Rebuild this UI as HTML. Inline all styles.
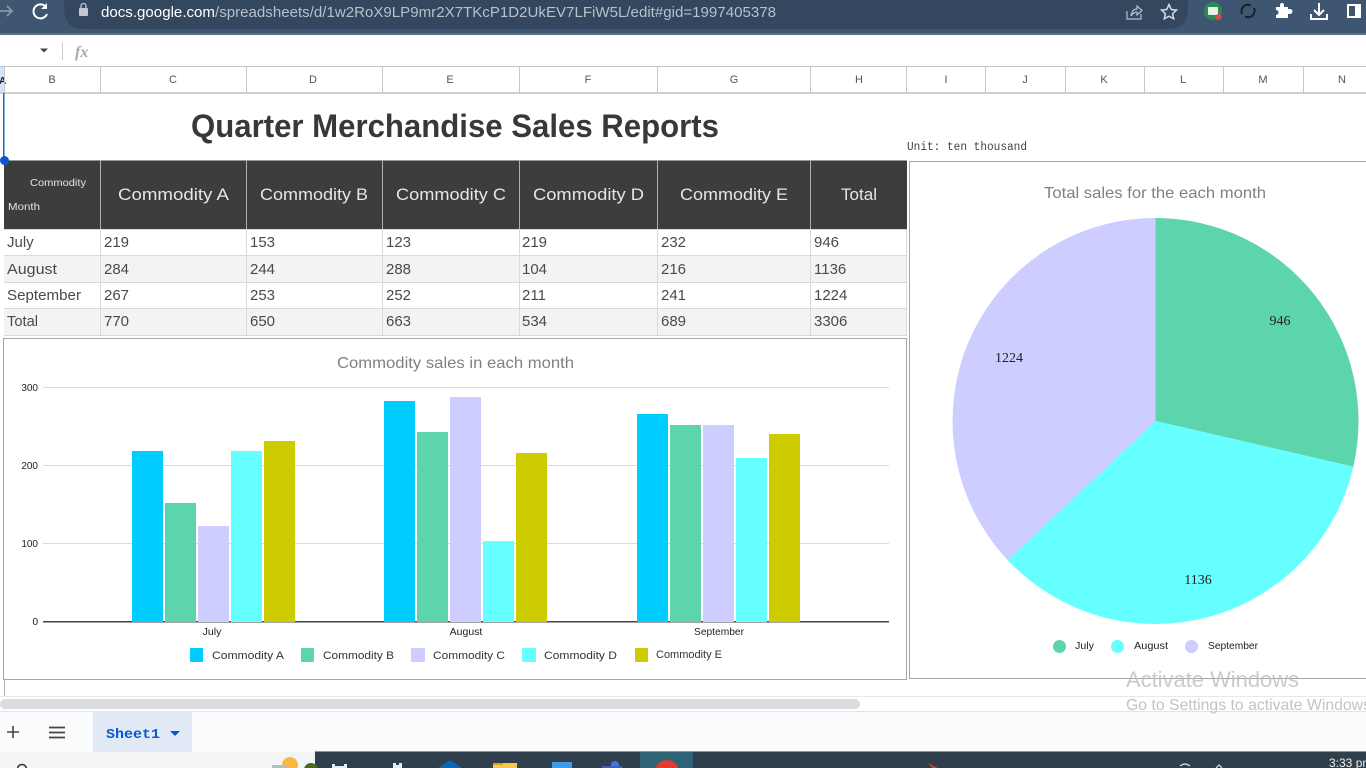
<!DOCTYPE html>
<html><head><meta charset="utf-8"><style>
html,body{margin:0;padding:0;background:#fff;width:1366px;height:768px;overflow:hidden}
svg{display:block}
svg{font-family:"Liberation Sans",sans-serif}
.m{font-family:"Liberation Mono",monospace}
.s{font-family:"Liberation Serif",serif}
</style></head><body>
<svg width="1366" height="768" viewBox="0 0 1366 768" xmlns="http://www.w3.org/2000/svg">
<!-- browser bar -->
<rect x="0" y="0" width="1366" height="34" fill="#3f5673"/>
<rect x="0" y="33" width="1366" height="2" fill="#5d6f85"/>
<path d="M64 0H1188V8Q1188 29 1168 29H84Q64 29 64 8Z" fill="#33475f"/>
<path d="M0 11H11M7 6L12 11L7 16" stroke="#8c98a8" stroke-width="1.8" fill="none"/>
<path d="M46 7A7 7 0 1 0 47 14" stroke="#fff" stroke-width="2" fill="none"/><path d="M47 3V9H41Z" fill="#fff"/>
<rect x="79" y="8" width="9" height="8" rx="1" fill="#c3c9d2"/><path d="M81 8V6A2.5 2.5 0 0 1 86 6V8" stroke="#c3c9d2" fill="none" stroke-width="1.3"/>
<text x="101" y="17" font-size="14.5" fill="#fff" textLength="114" lengthAdjust="spacingAndGlyphs">docs.google.com</text>
<text x="215" y="17" font-size="14.5" fill="#b7c0cc" textLength="561" lengthAdjust="spacingAndGlyphs">/spreadsheets/d/1w2RoX9LP9mr2X7TKcP1D2UkEV7LFiW5L/edit#gid=1997405378</text>
<path d="M1127 11V19H1141V14M1131 16Q1132 9 1137 9V6L1142 10.5L1137 15V12Q1134 12 1131 16Z" stroke="#b7c0cc" stroke-width="1.2" fill="none"/>
<path d="M1169 4.500L1171.300 9.500L1176.500 10.100L1172.600 13.700L1173.700 18.800L1169 16.200L1164.300 18.800L1165.400 13.700L1161.500 10.100L1166.700 9.500Z" stroke="#d5dae0" stroke-width="1.5" fill="none"/>
<circle cx="1213" cy="11" r="9" fill="#2f8a54"/><rect x="1208" y="7" width="10" height="8" rx="1" fill="#e8efe9"/><circle cx="1218.500" cy="17" r="3" fill="#e04a42"/>
<path d="M1242 14A6.500 6.500 0 0 1 1251 5.500M1254 8A6.500 6.500 0 0 1 1245 16.500" stroke="#1a1f24" stroke-width="2" fill="none"/>
<path d="M1276 7H1280V5A2 2 0 0 1 1284 5V7H1288V9H1290A2 2 0 0 1 1290 14H1288V18H1276V15A2 2 0 0 0 1276 10Z" fill="#fff"/>
<path d="M1319 3V14M1314 10L1319 15L1324 10M1311 14V19H1327V14" stroke="#fff" stroke-width="2" fill="none"/>
<rect x="1347" y="4" width="14" height="14" fill="#fff"/><rect x="1349" y="6" width="6" height="10" fill="#3f5673"/>
<!-- formula bar -->
<path d="M40 48.500H48L44 52.500Z" fill="#444"/>
<rect x="62" y="42" width="1" height="18" fill="#ccc"/>
<text x="75" y="57" font-size="16" class="s" font-style="italic" font-weight="bold" fill="#a8a8a8">fx</text>
<!-- column headers -->
<rect x="0" y="66" width="1366" height="1" fill="#c4c4c4"/>
<rect x="0" y="92" width="1366" height="2" fill="#cfcfcf"/>
<rect x="0" y="67" width="4" height="25" fill="#d3e3fd"/>
<text x="-1" y="84" font-size="10" font-weight="bold" fill="#222">A</text>
<g fill="#c8c8c8">
<rect x="4" y="67" width="1" height="26"/><rect x="100" y="67" width="1" height="26"/><rect x="246" y="67" width="1" height="26"/><rect x="382" y="67" width="1" height="26"/><rect x="519" y="67" width="1" height="26"/><rect x="657" y="67" width="1" height="26"/><rect x="810" y="67" width="1" height="26"/><rect x="906" y="67" width="1" height="26"/><rect x="985" y="67" width="1" height="26"/><rect x="1065" y="67" width="1" height="26"/><rect x="1144" y="67" width="1" height="26"/><rect x="1223" y="67" width="1" height="26"/><rect x="1303" y="67" width="1" height="26"/>
</g>
<g font-size="11" fill="#555" text-anchor="middle">
<text x="52" y="83">B</text><text x="173" y="83">C</text><text x="313" y="83">D</text><text x="450" y="83">E</text><text x="588" y="83">F</text><text x="734" y="83">G</text><text x="859" y="83">H</text><text x="946" y="83">I</text><text x="1025" y="83">J</text><text x="1104" y="83">K</text><text x="1183" y="83">L</text><text x="1263" y="83">M</text><text x="1342" y="83">N</text>
</g>
<!-- title -->
<text x="191" y="137" font-size="32" font-weight="bold" fill="#383838" textLength="528" lengthAdjust="spacingAndGlyphs">Quarter Merchandise Sales Reports</text>
<text x="907" y="150" class="m" font-size="11.500" fill="#444" textLength="120" lengthAdjust="spacingAndGlyphs">Unit: ten thousand</text>
<!-- table -->
<rect x="4" y="160" width="903" height="69" fill="#3d3d3d"/>
<rect x="4" y="160" width="903" height="1" fill="#999"/>
<rect x="4" y="255" width="903" height="27" fill="#f3f3f3"/>
<rect x="4" y="308" width="903" height="27" fill="#f3f3f3"/>
<g fill="#d9d9d9">
<rect x="4" y="229" width="903" height="1"/><rect x="4" y="255" width="903" height="1"/><rect x="4" y="282" width="903" height="1"/><rect x="4" y="308" width="903" height="1"/><rect x="4" y="335" width="903" height="1"/>
<rect x="100" y="229" width="1" height="107"/><rect x="246" y="229" width="1" height="107"/><rect x="382" y="229" width="1" height="107"/><rect x="519" y="229" width="1" height="107"/><rect x="657" y="229" width="1" height="107"/><rect x="810" y="229" width="1" height="107"/><rect x="906" y="229" width="1" height="107"/>
</g>
<g fill="#b0b0b0">
<rect x="100" y="160" width="1" height="69"/><rect x="246" y="160" width="1" height="69"/><rect x="382" y="160" width="1" height="69"/><rect x="519" y="160" width="1" height="69"/><rect x="657" y="160" width="1" height="69"/><rect x="810" y="160" width="1" height="69"/>
</g>
<g fill="#e6e6e6">
<text x="30" y="186" font-size="10" textLength="56" lengthAdjust="spacingAndGlyphs">Commodity</text>
<text x="8" y="210" font-size="10" textLength="32" lengthAdjust="spacingAndGlyphs">Month</text>
<text x="118" y="200" font-size="17" textLength="111" lengthAdjust="spacingAndGlyphs">Commodity A</text>
<text x="260" y="200" font-size="17" textLength="108" lengthAdjust="spacingAndGlyphs">Commodity B</text>
<text x="396" y="200" font-size="17" textLength="110" lengthAdjust="spacingAndGlyphs">Commodity C</text>
<text x="533" y="200" font-size="17" textLength="111" lengthAdjust="spacingAndGlyphs">Commodity D</text>
<text x="680" y="200" font-size="17" textLength="108" lengthAdjust="spacingAndGlyphs">Commodity E</text>
<text x="841" y="200" font-size="17" textLength="36" lengthAdjust="spacingAndGlyphs">Total</text>
</g>
<g font-size="15" fill="#4a4a4a">
<text x="7" y="247">July</text><text x="104" y="247">219</text><text x="250" y="247">153</text><text x="386" y="247">123</text><text x="522" y="247">219</text><text x="661" y="247">232</text><text x="814" y="247">946</text>
<text x="7" y="274" textLength="50" lengthAdjust="spacingAndGlyphs">August</text><text x="104" y="274">284</text><text x="250" y="274">244</text><text x="386" y="274">288</text><text x="522" y="274">104</text><text x="661" y="274">216</text><text x="814" y="274">1136</text>
<text x="7" y="300" textLength="74" lengthAdjust="spacingAndGlyphs">September</text><text x="104" y="300">267</text><text x="250" y="300">253</text><text x="386" y="300">252</text><text x="522" y="300">211</text><text x="661" y="300">241</text><text x="814" y="300">1224</text>
<text x="7" y="326" textLength="31" lengthAdjust="spacingAndGlyphs">Total</text><text x="104" y="326">770</text><text x="250" y="326">650</text><text x="386" y="326">663</text><text x="522" y="326">534</text><text x="661" y="326">689</text><text x="814" y="326">3306</text>
</g>
<!-- selection -->
<rect x="3" y="93" width="1.500" height="67" fill="#1a62d8"/>
<circle cx="4.500" cy="160.500" r="4.500" fill="#0b57d0"/>
<!-- bar chart frame -->
<rect x="3.500" y="338.500" width="903" height="341" fill="#fff" stroke="#a6a6a6"/>
<text x="337" y="368" font-size="16" fill="#808080" textLength="237" lengthAdjust="spacingAndGlyphs">Commodity sales in each month</text>
<g fill="#d9d9d9"><rect x="43" y="387" width="846" height="1"/><rect x="43" y="465" width="846" height="1"/><rect x="43" y="543" width="846" height="1"/></g>
<rect x="43" y="621" width="846" height="1.500" fill="#444"/>
<g font-size="10" fill="#222" text-anchor="end"><text x="38" y="391">300</text><text x="38" y="469">200</text><text x="38" y="547">100</text><text x="38" y="625">0</text></g>
<g fill="#00ccff"><rect x="132" y="451" width="31" height="171"/><rect x="384" y="401" width="31" height="221"/><rect x="637" y="414" width="31" height="208"/></g>
<g fill="#5dd5ac"><rect x="165" y="503" width="31" height="119"/><rect x="417" y="432" width="31" height="190"/><rect x="670" y="425" width="31" height="197"/></g>
<g fill="#cdcdff"><rect x="198" y="526" width="31" height="96"/><rect x="450" y="397" width="31" height="225"/><rect x="703" y="425" width="31" height="197"/></g>
<g fill="#66ffff"><rect x="231" y="451" width="31" height="171"/><rect x="483" y="541" width="31" height="81"/><rect x="736" y="458" width="31" height="164"/></g>
<g fill="#cccc00"><rect x="264" y="441" width="31" height="181"/><rect x="516" y="453" width="31" height="169"/><rect x="769" y="434" width="31" height="188"/></g>
<g font-size="10.500" fill="#222" text-anchor="middle"><text x="212" y="635">July</text><text x="466" y="635">August</text><text x="719" y="635" textLength="50" lengthAdjust="spacingAndGlyphs">September</text></g>
<rect x="190" y="648" width="13" height="14" rx="1" fill="#00ccff"/><rect x="301" y="648" width="13" height="14" rx="1" fill="#5dd5ac"/><rect x="411" y="648" width="14" height="14" rx="1" fill="#cdcdff"/><rect x="522" y="648" width="14" height="14" rx="1" fill="#66ffff"/><rect x="635" y="648" width="13" height="14" rx="1" fill="#cccc00"/>
<g font-size="11" fill="#333">
<text x="212" y="659" textLength="72" lengthAdjust="spacingAndGlyphs">Commodity A</text><text x="323" y="659" textLength="71" lengthAdjust="spacingAndGlyphs">Commodity B</text><text x="433" y="659" textLength="72" lengthAdjust="spacingAndGlyphs">Commodity C</text><text x="544" y="659" textLength="73" lengthAdjust="spacingAndGlyphs">Commodity D</text><text x="656" y="658" textLength="66" lengthAdjust="spacingAndGlyphs">Commodity E</text>
</g>
<!-- pie frame -->
<rect x="909.500" y="161.500" width="470" height="517" fill="#fff" stroke="#a6a6a6"/>
<text x="1044" y="198" font-size="16" fill="#808080" textLength="222" lengthAdjust="spacingAndGlyphs">Total sales for the each month</text>
<path d="M1155.500 421V218A203 203 0 0 1 1353.300 466.700Z" fill="#5dd5ac"/>
<path d="M1155.500 421L1353.300 466.700A203 203 0 0 1 1007.800 560.200Z" fill="#66ffff"/>
<path d="M1155.500 421L1007.800 560.200A203 203 0 0 1 1155.500 218Z" fill="#cdcdff"/>
<g font-size="14" class="s" fill="#222" text-anchor="middle"><text x="1280" y="325">946</text><text x="1198" y="584">1136</text><text x="1009" y="362">1224</text></g>
<circle cx="1059.500" cy="646.500" r="6.500" fill="#5dd5ac"/><circle cx="1117.500" cy="646.500" r="6.500" fill="#66ffff"/><circle cx="1191.500" cy="646.500" r="6.500" fill="#cdcdff"/>
<g font-size="10.500" fill="#222"><text x="1075" y="649" textLength="19" lengthAdjust="spacingAndGlyphs">July</text><text x="1134" y="649" textLength="34" lengthAdjust="spacingAndGlyphs">August</text><text x="1208" y="649" textLength="50" lengthAdjust="spacingAndGlyphs">September</text></g>
<!-- below -->
<rect x="4" y="680" width="1" height="16" fill="#b5b5b5"/>
<rect x="0" y="696" width="1366" height="1" fill="#e8e8e8"/>
<rect x="0" y="697" width="1366" height="14" fill="#fff"/>
<rect x="0" y="699" width="860" height="10" rx="5" fill="#dadce0"/>
<rect x="0" y="711" width="1366" height="1" fill="#e1e3e6"/>
<rect x="0" y="712" width="1366" height="40" fill="#f9fbfd"/>
<rect x="93" y="712" width="99" height="40" fill="#e1e9f7"/>
<path d="M13 726V738M7 732H19" stroke="#444" stroke-width="1.600"/>
<path d="M49 727.500H65M49 732.500H65M49 737.500H65" stroke="#444" stroke-width="1.800"/>
<text x="106" y="738" font-size="14" font-weight="bold" class="m" fill="#0b57d0" textLength="54" lengthAdjust="spacingAndGlyphs">Sheet1</text>
<path d="M170 731H180L175 736Z" fill="#0b57d0"/>
<!-- activate -->
<text x="1126" y="687" font-size="22" fill="#bdbdbd" fill-opacity=".8" textLength="173" lengthAdjust="spacingAndGlyphs">Activate Windows</text>
<text x="1126" y="710" font-size="16" fill="#bdbdbd" fill-opacity=".9" textLength="245" lengthAdjust="spacingAndGlyphs">Go to Settings to activate Windows</text>
<!-- taskbar -->
<rect x="0" y="752" width="315" height="16" fill="#f3f4f4"/>
<rect x="315" y="752" width="1051" height="16" fill="#2f3f4b"/>
<rect x="315" y="751" width="1051" height="1" fill="#8a949b"/>
<circle cx="22" cy="769" r="4.500" stroke="#333" stroke-width="1.500" fill="none"/>
<circle cx="290" cy="765" r="8" fill="#f5b942"/><circle cx="311" cy="770" r="7" fill="#4a6a1f"/>
<rect x="272" y="765" width="16" height="3" fill="#b8bcc0"/>
<rect x="332" y="764" width="15" height="4" fill="#e8ecef"/><rect x="335" y="764" width="9" height="2" fill="#2f3f4b"/>
<path d="M393 768V763H396V765H399V763H402V768Z" fill="#e8ecef"/>
<path d="M438 768L450 760L462 768Z" fill="#0b66b5"/>
<rect x="493" y="763" width="24" height="5" fill="#f2c94c"/><rect x="493" y="763" width="10" height="2" fill="#d9a520"/>
<rect x="552" y="762" width="20" height="6" fill="#3f9be8"/>
<circle cx="615" cy="765" r="4" fill="#4a74d9"/><rect x="602" y="766" width="20" height="2" fill="#3d5fc4"/>
<rect x="640" y="752" width="53" height="16" fill="#2e6275"/>
<circle cx="667" cy="772" r="12" fill="#e53a30"/>
<path d="M928 763L938 768H932Z" fill="#d9392f"/>
<path d="M1180 766Q1185 762 1190 766" stroke="#ddd" stroke-width="1.200" fill="none"/>
<path d="M1216 768L1219 765L1222 768" stroke="#ddd" stroke-width="1.200" fill="none"/>
<text x="1329" y="767" font-size="12" fill="#f0f0f0">3:33 pm</text>
</svg>
</body></html>
